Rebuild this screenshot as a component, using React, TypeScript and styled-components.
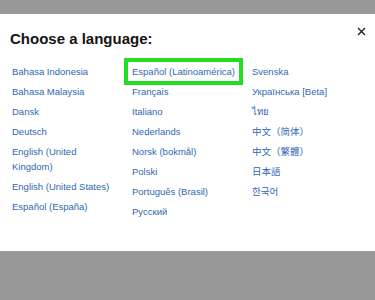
import styled, { createGlobalStyle } from "styled-components";

const GlobalStyle = createGlobalStyle`
  html, body {
    margin: 0;
    padding: 0;
    background: #989898;
  }
  body {
    font-family: "Liberation Sans", "Noto Sans CJK SC", sans-serif;
  }
`;

const Page = styled.div`
  width: 375px;
  height: 300px;
  padding-top: 14px;
  box-sizing: border-box;
  background: #989898;
`;

const Modal = styled.div`
  position: relative;
  height: 237px;
  background: #ffffff;
  padding-top: 15px;
  box-sizing: border-box;
`;

const Title = styled.h2`
  margin: 0;
  padding-left: 10px;
  font-size: 15px;
  line-height: 20px;
  font-weight: 700;
  color: #141414;
`;

const CloseButton = styled.button`
  position: absolute;
  top: 10px;
  right: 7px;
  width: 14px;
  height: 14px;
  padding: 0;
  border: 0;
  background: transparent;
  display: flex;
  align-items: center;
  justify-content: center;
  cursor: pointer;
`;

const Columns = styled.div`
  display: grid;
  grid-template-columns: 120px 120px 120px;
  padding-left: 12px;
  margin-top: 15px;
`;

const Column = styled.ul`
  list-style: none;
  margin: 0;
  padding: 0 16px 0 0;
  display: flex;
  flex-direction: column;
  align-items: flex-start;
  gap: 5px;
`;

const Item = styled.li`
  font-size: 9.5px;
  line-height: 15px;
`;

const LangLink = styled.a<{ selected?: boolean }>`
  display: inline-block;
  color: #2f67b4;
  text-decoration: none;
  padding: 2px 4px;
  margin: -2px -4px;
  outline: ${({ selected }) => (selected ? "4px solid #22dd22" : "none")};
`;

const columns: string[][] = [
  [
    "Bahasa Indonesia",
    "Bahasa Malaysia",
    "Dansk",
    "Deutsch",
    "English (United Kingdom)",
    "English (United States)",
    "Español (España)",
  ],
  [
    "Español (Latinoamérica)",
    "Français",
    "Italiano",
    "Nederlands",
    "Norsk (bokmål)",
    "Polski",
    "Português (Brasil)",
    "Русский",
  ],
  [
    "Svenska",
    "Українська [Beta]",
    "ไทย",
    "中文（简体）",
    "中文（繁體）",
    "日本語",
    "한국어",
  ],
];

export default function App() {
  const selected = "Español (Latinoamérica)";

  return (
    <Page>
      <GlobalStyle />
      <Modal>
        <Title>Choose a language:</Title>
        <CloseButton aria-label="Close">
          <svg width="9" height="9" viewBox="0 0 9 9">
            <path d="M1 1 L8 8 M8 1 L1 8" stroke="#222" strokeWidth="1.4" />
          </svg>
        </CloseButton>
        <Columns>
          {columns.map((col, i) => (
            <Column key={i}>
              {col.map((lang) => (
                <Item key={lang}>
                  <LangLink href="#" selected={lang === selected}>
                    {lang}
                  </LangLink>
                </Item>
              ))}
            </Column>
          ))}
        </Columns>
      </Modal>
    </Page>
  );
}
